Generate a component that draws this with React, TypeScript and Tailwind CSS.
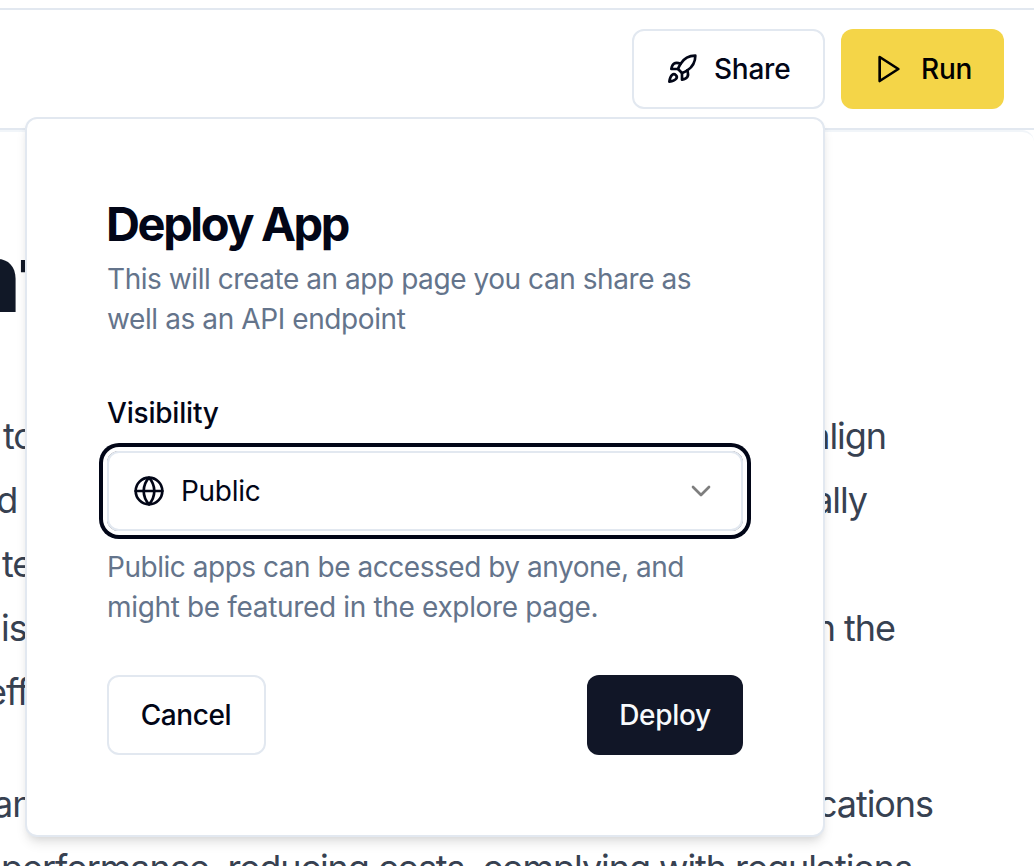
import React from "react";
import { ChevronDown } from "lucide-react";

type Line = { left: string; right: string; leftClass: string; rightClass: string };

const paragraph: Line[] = [
  { left: "to", right: "align", leftClass: "ml-[3px]", rightClass: "mr-[148px]" },
  { left: "and", right: "ally", leftClass: "-ml-[43px]", rightClass: "mr-[167px]" },
  { left: "te", right: "", leftClass: "ml-[2px]", rightClass: "" },
  { left: "is", right: "n the", leftClass: "ml-[1px]", rightClass: "mr-[139px]" },
  { left: "eff", right: "", leftClass: "-ml-[14px]", rightClass: "" },
];

function Icon({ children }: { children: React.ReactNode }) {
  return (
    <svg
      className="size-8 shrink-0"
      viewBox="0 0 24 24"
      fill="none"
      stroke="currentColor"
      strokeWidth="2"
      strokeLinecap="round"
      strokeLinejoin="round"
    >
      {children}
    </svg>
  );
}

function RocketIcon() {
  return (
    <Icon>
      <path d="M4.5 16.5c-1.5 1.26-2 5-2 5s3.74-.5 5-2c.71-.84.7-2.13-.09-2.91a2.18 2.18 0 0 0-2.91-.09z" />
      <path d="m12 15-3-3a22 22 0 0 1 2-3.95A12.88 12.88 0 0 1 22 2c0 2.72-.78 7.5-6 11a22.35 22.35 0 0 1-4 2z" />
      <path d="M9 12H4s.55-3.03 2-4c1.62-1.08 5 0 5 0" />
      <path d="M12 15v5s3.03-.55 4-2c1.08-1.62 0-5 0-5" />
    </Icon>
  );
}

function PlayIcon() {
  return (
    <Icon>
      <polygon points="5 3 19 12 5 21 5 3" />
    </Icon>
  );
}

function GlobeIcon() {
  return (
    <Icon>
      <circle cx="12" cy="12" r="10" />
      <line x1="2" x2="22" y1="12" y2="12" />
      <path d="M12 2a15.3 15.3 0 0 1 4 10 15.3 15.3 0 0 1-4 10 15.3 15.3 0 0 1-4-10 15.3 15.3 0 0 1 4-10z" />
    </Icon>
  );
}

function TextLine({ line }: { line: Line }) {
  return (
    <div className="flex h-16 items-center justify-between whitespace-nowrap">
      <span className={line.leftClass}>{line.left}</span>
      <span className={line.rightClass}>{line.right}</span>
    </div>
  );
}

function DeployCard() {
  return (
    <section className="absolute left-[25px] top-[117px] flex h-[720px] w-[800px] flex-col rounded-xl border-2 border-[#e2e8f0] bg-white px-20 pt-20 shadow-[0_8px_12px_-2px_rgb(0_0_0/0.1),0_4px_8px_-4px_rgb(0_0_0/0.1)]">
      <h2 className="-ml-px h-12 pt-px text-[47px] font-[650] leading-[48px] tracking-[-2.4px]">Deploy App</h2>
      <p className="mt-3 whitespace-nowrap text-[28px] leading-10 tracking-[-0.44px] text-[#64748b]">
        This will create an app page you can share as
        <br />
        <span className="tracking-[-0.4px]">well as an API endpoint</span>
      </p>
      <label className="mt-[60px] text-[28px] font-medium leading-7 tracking-[-0.2px]">Visibility</label>
      <button className="mt-6 flex h-20 w-full shrink-0 items-center rounded-xl border-2 border-[#e2e8f0] px-6 text-[28px] leading-10 tracking-[-0.3px] ring-4 ring-[#020617] ring-offset-4">
        <GlobeIcon />
        <span className="ml-4">Public</span>
        <ChevronDown className="ml-auto size-8 text-black opacity-50" />
      </button>
      <p className="mt-4 whitespace-nowrap text-[28px] leading-10 tracking-[-0.47px] text-[#64748b]">
        Public apps can be accessed by anyone, and
        <br />
        <span className="tracking-[-0.34px]">might be featured in the explore page.</span>
      </p>
      <div className="mt-12 flex justify-between text-[28px] font-medium tracking-[-0.4px]">
        <button className="h-20 w-[159px] rounded-xl border-2 border-[#e2e8f0] pr-px">Cancel</button>
        <button className="h-20 w-[156px] rounded-xl bg-[#111627] text-[#f8fafc] tracking-[-0.3px]">Deploy</button>
      </div>
    </section>
  );
}

export default function App() {
  return (
    <div className="relative h-[866px] w-[1034px] overflow-hidden bg-white font-['Inter',sans-serif] text-[#020617]">
      <div className="h-2.5 border-b-2 border-[#e2e8f0]" />
      <header className="flex h-[120px] justify-end gap-4 border-b-2 border-[#e2e8f0] pr-[30px] pt-[19px] text-[28px] font-medium tracking-[-0.25px]">
        <button className="flex h-20 w-[193px] items-center rounded-xl border-2 border-[#e2e8f0] pl-8">
          <RocketIcon />
          <span className="ml-4">Share</span>
        </button>
        <button className="flex h-20 w-[163px] items-center rounded-xl bg-[#f4d548] pl-8 text-black">
          <PlayIcon />
          <span className="ml-4">Run</span>
        </button>
      </header>
      <main className="h-[736px] overflow-hidden rounded-tr-xl border-t-2 border-[#f1f5f9]">
        <h1 className="-ml-[40px] mt-[95px] h-[100px] whitespace-nowrap text-[96px] font-extrabold leading-[100px] tracking-[-1px] text-[#111827]">nt</h1>
        <div className="mt-[77px] text-[36px] tracking-[-1.06px] text-[#374151]">
          {paragraph.map((line) => (
            <TextLine key={line.left} line={line} />
          ))}
          <div className="mt-12">
            <TextLine line={{ left: "an", right: "cations", leftClass: "-ml-[7px]", rightClass: "mr-[101px]" }} />
            <div className="ml-px whitespace-nowrap leading-[64px]">
              performance, reducing costs, complying with regulations
            </div>
          </div>
        </div>
      </main>
      <DeployCard />
    </div>
  );
}
